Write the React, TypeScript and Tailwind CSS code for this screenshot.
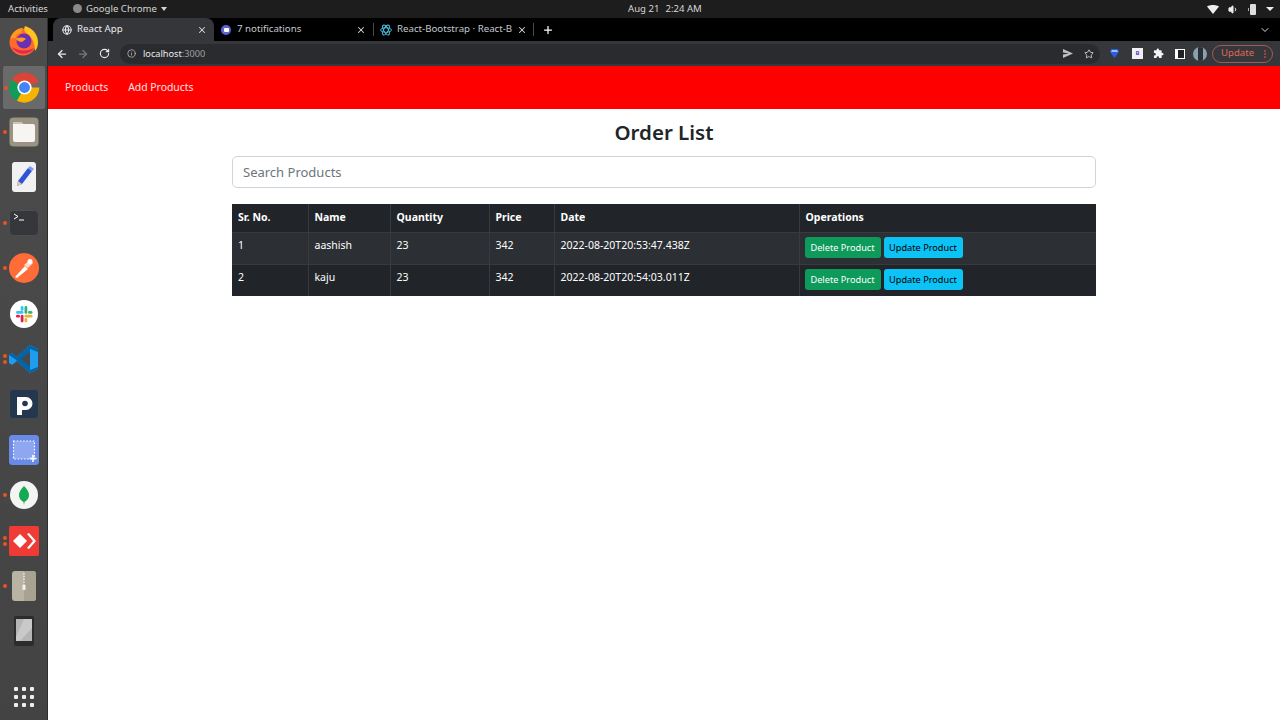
import React from 'react';
import { ArrowLeft, ArrowRight, RotateCw, Info, Star, ChevronDown, X, Plus, Globe, Volume1 } from 'lucide-react';

const Dot = ({ n = 1 }: { n?: number }) => (
  <div className="absolute left-[3px] top-0 bottom-0 flex flex-col justify-center gap-[2px]">
    {Array.from({ length: n }).map((_, i) => (
      <span key={i} className="w-[4px] h-[4px] rounded-full bg-[#e95420]" />
    ))}
  </div>
);

const Firefox = () => (
  <svg width="32" height="32" viewBox="0 0 32 32">
    <circle cx="15" cy="17" r="13.5" fill="#ff6a2b" />
    <path d="M3 14C4 7 9 3 15 3c-2 2-2 4-1 5-4 0-6 2-6 5-2 0-4 0-5 1z" fill="#ff9a1f" />
    <path d="M17 1c7 2 13 8 13 16 0 4-1 7-3 9 0-8-3-15-10-19-1-2-1-4 0-6z" fill="#ffc21f" />
    <circle cx="16" cy="16" r="7.5" fill="#6b2fb3" />
    <path d="M8 14c3-2 8-2 10 0l-4 3c-2 0-5-1-6-3z" fill="#ff9a1f" />
    <path d="M4 22c3 6 10 8 16 6 3-1 5-3 6-5-5 3-14 4-22-1z" fill="#e8264f" />
  </svg>
);

const Chrome = () => (
  <svg width="35" height="35" viewBox="0 0 32 32">
    <path d="M16 16 4 9.500A14 14 0 0 1 29 11z" fill="#db4437" />
    <path d="M16 16 9 28.200A14 14 0 0 1 4 9z" fill="#0f9d58" />
    <path d="M16 16h13.600A14 14 0 0 1 9 28.200z" fill="#f4b400" />
    <circle cx="16" cy="16" r="6.500" fill="#fff" />
    <circle cx="16" cy="16" r="5" fill="#4285f4" />
  </svg>
);

const Files = () => (
  <svg width="30" height="30" viewBox="0 0 30 30">
    <rect x="0.5" y="0.5" width="29" height="29" rx="4" fill="#9b9484" />
    <path d="M4 7a2 2 0 0 1 2-2h6l2 2h10a2 2 0 0 1 2 2v14a2 2 0 0 1-2 2H6a2 2 0 0 1-2-2z" fill="#f6f5f2" />
    <path d="M4 7a2 2 0 0 1 2-2h6l2 2z" fill="#c9c5ba" />
  </svg>
);

const Editor = () => (
  <svg width="24" height="30" viewBox="0 0 24 30">
    <rect width="24" height="30" rx="3" fill="#f1f1f4" />
    <path d="m16 6 4 3-10 13-5 2 1-5z" fill="#2e55d8" />
    <path d="m16 6 2-2 4 3-2 2z" fill="#7d9bf0" />
    <path d="m6 19 4 3-5 2z" fill="#e7c9a0" />
  </svg>
);

const Terminal = () => (
  <svg width="30" height="26" viewBox="0 0 30 26">
    <rect x="0.5" y="0.5" width="29" height="25" rx="4" fill="#36373a" stroke="#4d4e52" />
    <path d="m5 4 4 2.500L5 9" fill="none" stroke="#fff" strokeWidth="1" />
    <path d="M10 10h5" stroke="#fff" strokeWidth="1" />
  </svg>
);

const Postman = () => (
  <svg width="30" height="30" viewBox="0 0 30 30">
    <circle cx="15" cy="15" r="15" fill="#ff6c37" />
    <path d="M6 24 16 13l3 3L8 25z" fill="#fff" />
    <path d="M15 12l6-5 3 3-5 5z" fill="#ffd9c9" />
    <circle cx="21" cy="8.500" r="2.500" fill="#fff" />
  </svg>
);

const Slack = () => (
  <svg width="28" height="28" viewBox="0 0 28 28">
    <circle cx="14" cy="14" r="14" fill="#fff" />
    <rect x="6" y="11" width="7.500" height="2.800" rx="1.400" fill="#36c5f0" />
    <rect x="10.700" y="6" width="2.800" height="5" rx="1.400" fill="#36c5f0" />
    <rect x="14.500" y="6" width="2.800" height="7.800" rx="1.400" fill="#2eb67d" />
    <rect x="18" y="11" width="4.500" height="2.800" rx="1.400" fill="#2eb67d" />
    <rect x="14.500" y="14.800" width="8" height="2.800" rx="1.400" fill="#ecb22e" />
    <rect x="14.500" y="18" width="2.800" height="4.500" rx="1.400" fill="#ecb22e" />
    <rect x="10.700" y="14.800" width="2.800" height="7.700" rx="1.400" fill="#e01e5a" />
    <rect x="6" y="14.800" width="4" height="2.800" rx="1.400" fill="#e01e5a" />
  </svg>
);

const VSCode = () => (
  <svg width="30" height="30" viewBox="0 0 30 30">
    <path d="M21 1 29 5v20l-8 4-13-12-5 4-3-2v-8l3-2 5 4z" fill="#1f9cf0" />
    <path d="M21 1 8 13l-5-4-3 2 6 4 15 14 8-4v-2l-8 3V5l8 3V5z" fill="#0065a9" />
    <path d="M21 8v14l-9-7z" fill="#48484a" />
  </svg>
);

const Pgadmin = () => (
  <svg width="28" height="28" viewBox="0 0 28 28">
    <rect width="28" height="28" rx="3" fill="#24374e" />
    <path d="M7 7h9a6.500 6.500 0 0 1 0 13h-4v5H7z" fill="#fff" />
    <circle cx="15" cy="13.500" r="2.800" fill="#24374e" />
  </svg>
);

const Screenshot = () => (
  <svg width="30" height="30" viewBox="0 0 30 30">
    <rect width="30" height="30" rx="3.500" fill="#6a8ae8" />
    <rect x="4.500" y="6" width="21" height="18" fill="#8ea7f0" stroke="#fff" strokeWidth="1.200" strokeDasharray="1.600 1.600" />
    <path d="M24 20v7M20.500 23.500h7" stroke="#fff" strokeWidth="1.600" />
  </svg>
);

const Mongo = () => (
  <svg width="28" height="28" viewBox="0 0 28 28">
    <circle cx="14" cy="14" r="14" fill="#f4f4f2" />
    <path d="M14 5c3 3 5 6 5 9 0 4-3 6-4.500 7l-.5 3-.5-3C12 20 9 18 9 14c0-3 2-6 5-9z" fill="#13aa52" />
  </svg>
);

const Anydesk = () => (
  <svg width="30" height="30" viewBox="0 0 30 30">
    <rect width="30" height="30" rx="2" fill="#ef3b36" />
    <path d="m11 8 7 7-7 7-7-7z" fill="#fff" />
    <path d="m18 8 2-1 7 8-7 8-2-1 6-7z" fill="#fff" />
  </svg>
);

const Archive = () => (
  <svg width="24" height="30" viewBox="0 0 24 30">
    <rect width="24" height="30" rx="3" fill="#b9b3a3" />
    <path d="M12 0h9a3 3 0 0 1 3 3v24a3 3 0 0 1-3 3h-9z" fill="#a8a291" />
    <path d="M12 2v12" stroke="#f2f0ea" strokeWidth="1.400" strokeDasharray="1.400 1.400" />
    <rect x="10.500" y="14" width="3" height="5" fill="#f2f0ea" />
  </svg>
);

const Tablet = () => (
  <svg width="20" height="30" viewBox="0 0 20 30">
    <rect width="20" height="30" rx="2" fill="#2b2c2e" />
    <rect x="2" y="3" width="16" height="22" fill="#b5b5b5" />
    <path d="m10 3h8v9l-12 13H2v-4z" fill="#c9c9c9" />
  </svg>
);

const Bootstrap = () => (
  <svg width="12" height="12" viewBox="0 0 24 24" fill="none" stroke="#4dc6e6" strokeWidth="1.800">
    <ellipse cx="12" cy="12" rx="11" ry="4.500" />
    <ellipse cx="12" cy="12" rx="11" ry="4.500" transform="rotate(60 12 12)" />
    <ellipse cx="12" cy="12" rx="11" ry="4.500" transform="rotate(120 12 12)" />
  </svg>
);

const Tab = ({ icon, title, active }: { icon: React.ReactNode; title: string; active?: boolean }) => (
  <div className={`h-full flex items-center pr-[7px] ${active ? 'w-[161px] pl-[8px] gap-[4px] bg-[#35363a] rounded-t-lg text-[#e8eaed]' : 'w-[159px] pl-[6px] gap-[5px] text-[#c4c7cc]'}`}>
    <span className="w-[12px] flex justify-center shrink-0">{icon}</span>
    <span className="flex-1 text-[9.7px] whitespace-nowrap">{title}</span>
    <X size={10} className="text-[#dadce0] shrink-0" strokeWidth={2.5} />
  </div>
);

const dock = [
  { icon: <Firefox /> },
  { icon: <Chrome />, dots: 1, active: true },
  { icon: <Files />, dots: 1 },
  { icon: <Editor /> },
  { icon: <Terminal />, dots: 1 },
  { icon: <Postman />, dots: 1 },
  { icon: <Slack /> },
  { icon: <VSCode />, dots: 2 },
  { icon: <Pgadmin /> },
  { icon: <Screenshot /> },
  { icon: <Mongo />, dots: 1 },
  { icon: <Anydesk />, dots: 2 },
  { icon: <Archive />, dots: 1 },
  { icon: <Tablet /> },
];

const rows = [
  { id: 1, name: 'aashish', qty: 23, price: 342, date: '2022-08-20T20:53:47.438Z', bg: 'bg-[#2c3034]' },
  { id: 2, name: 'kaju', qty: 23, price: 342, date: '2022-08-20T20:54:03.011Z', bg: 'bg-[#212529]' },
];

const th = 'border-l border-[#373b3e] first:border-l-0 px-[6px] text-left font-bold align-middle';
const td = 'border-l border-[#373b3e] first:border-l-0 px-[6px] pt-[5px] leading-[14px] align-top font-normal';

export default function App() {
  return (
    <div className="w-[1280px] h-[720px] overflow-hidden flex flex-col bg-white font-['Noto_Sans',sans-serif]">
      {/* gnome top bar */}
      <div className="h-[18px] shrink-0 bg-[#1d1d1d] flex items-center text-[9.6px] text-[#d6d6d6]">
        <span className="pl-[8px] w-[73px]">Activities</span>
        <span className="w-[555px] flex items-center gap-[4px]">
          <span className="w-[9px] h-[9px] rounded-full bg-[#8a8a8a]" />
          Google Chrome
          <span className="border-x-[3.5px] border-x-transparent border-t-[4px] border-t-[#d6d6d6]" />
        </span>
        <span className="flex gap-[6px]">
          <span>Aug 21</span>
          <span>2:24 AM</span>
        </span>
        <div className="ml-auto flex items-center gap-[9px] pr-[6px]">
          <svg width="12" height="9" viewBox="0 0 12 9"><path d="M0 1.500C3-.5 9-.5 12 1.500L6 9z" fill="#eee" /></svg>
          <Volume1 size={11} fill="#eee" className="text-[#eee]" />
          <svg width="9" height="12" viewBox="0 0 9 12"><rect x="2" y="1" width="6" height="11" rx="1" fill="#ddd" /><rect x="0" y="5" width="1" height="3" fill="#aaa" /></svg>
          <span className="border-x-[4px] border-x-transparent border-t-[4px] border-t-[#eee]" />
        </div>
      </div>

      <div className="flex-1 flex min-h-0">
        {/* dock */}
        <div className="w-[48px] shrink-0 bg-gradient-to-b from-[#4c4c4c] to-[#434343] border-r border-[#2e2e2e] flex flex-col pt-[0.5px] pb-[5px]">
          {dock.map((d, i) => (
            <div key={i} className={`relative flex items-center justify-center ${d.active ? 'mt-[2.5px] h-[43px] bg-[#6a6a6b] ml-[3px] mr-[2px] rounded-[2px]' : 'h-[45.4px]'}`}>
              {d.dots ? (
                <span className={d.active ? 'absolute inset-y-0 -left-[2px] w-[4px]' : ''}>
                  <Dot n={d.dots} />
                </span>
              ) : null}
              {d.icon}
            </div>
          ))}
          <div className="mt-auto grid grid-cols-3 gap-[4px] w-fit mx-auto mb-[8px]">
            {Array.from({ length: 9 }).map((_, i) => (
              <span key={i} className="w-[4px] h-[4px] bg-[#eee] rounded-[1px]" />
            ))}
          </div>
        </div>

        <div className="flex-1 min-w-0 flex flex-col">
          {/* chrome tabs */}
          <div className="h-[23px] shrink-0 bg-black flex items-center pl-[5px]">
            <Tab active title="React App" icon={<Globe size={10} className="text-[#e8eaed]" strokeWidth={2.5} />} />
            <Tab title="7 notifications" icon={<span className="w-[10px] h-[10px] rounded-full bg-[#5b63d6] flex items-center justify-center"><span className="w-[5px] h-[4px] bg-white rounded-[1px]" /></span>} />
            <span className="w-px h-[13px] bg-[#4a4a4a]" />
            <Tab title="React-Bootstrap · React-B" icon={<Bootstrap />} />
            <span className="w-px h-[13px] bg-[#4a4a4a]" />
            <Plus size={12} className="text-white ml-[8px]" strokeWidth={2.5} />
            <ChevronDown size={12} className="text-[#dadce0] ml-auto mr-[9px]" strokeWidth={2} />
          </div>

          {/* chrome toolbar */}
          <div className="h-[25px] shrink-0 bg-[#36373a] flex items-center pl-[8px] pr-[6px]">
            <ArrowLeft size={12} className="text-[#e8eaed]" strokeWidth={2.5} />
            <ArrowRight size={12} className="text-[#77797d] ml-[9px]" strokeWidth={2.5} />
            <RotateCw size={11} className="text-[#e8eaed] ml-[10px]" strokeWidth={2.5} />
            <div className="ml-[10px] w-[980px] h-[20px] rounded-full bg-[#2a2b2e] flex items-center pl-[7px] pr-[6px]">
              <Info size={9} className="text-[#bdc1c6]" />
              <span className="ml-[7px] text-[9.2px] text-[#e8eaed]">localhost<span className="text-[#9aa0a6]">:3000</span></span>
              <svg className="ml-auto" width="10" height="9" viewBox="0 0 10 9"><path d="M0 0l10 4.500L0 9V5.500l6-1-6-1z" fill="#bdc1c6" /></svg>
              <Star size={10} className="text-[#dadce0] ml-[11px]" strokeWidth={2} />
            </div>
            <svg className="ml-[10px]" width="9" height="9" viewBox="0 0 9 9"><path d="M1 0h7l1 3-4.500 6L0 3z" fill="#2f5be0" /><path d="M2 1h5l1 2H1z" fill="#9fc0ff" /></svg>
            <span className="ml-[13px] w-[11px] h-[11px] bg-[#f1f1f4] text-[#6f42c1] text-[6px] font-bold flex items-center justify-center">B</span>
            <svg className="ml-[10px]" width="11" height="11" viewBox="0 0 24 24"><path d="M20.500 11H19V7a2 2 0 0 0-2-2h-4V3.500a2.500 2.500 0 0 0-5 0V5H4a2 2 0 0 0-2 2v3.800h1.500a2.700 2.700 0 0 1 0 5.400H2V20a2 2 0 0 0 2 2h3.800v-1.500a2.700 2.700 0 0 1 5.400 0V22H17a2 2 0 0 0 2-2v-4h1.500a2.500 2.500 0 0 0 0-5z" fill="#f1f3f4" /></svg>
            <span className="ml-[11px] w-[10px] h-[10px] bg-white flex justify-end p-[1px]"><span className="w-[6px] h-full bg-[#202124]" /></span>
            <span className="ml-[8px] w-[14px] h-[14px] rounded-full bg-[#8aa0ad] overflow-hidden flex justify-center"><span className="w-[5px] h-full bg-[#2b2f36]" /></span>
            <div className="ml-[5px] w-[61px] h-[18px] rounded-full border border-[#a35a55] flex items-center pl-[8px] pr-[6px] text-[9.6px] text-[#e0685e]">
              Update
              <span className="ml-auto flex flex-col gap-[1px]">
                <span className="w-[2px] h-[2px] rounded-full bg-[#c0463e]" />
                <span className="w-[2px] h-[2px] rounded-full bg-[#c0463e]" />
                <span className="w-[2px] h-[2px] rounded-full bg-[#c0463e]" />
              </span>
            </div>
          </div>

          {/* page */}
          <nav className="h-[43px] shrink-0 bg-[#ff0000] flex items-center gap-[20px] pl-[17px] pt-[1px] text-[10.4px] text-white/90">
            <span>Products</span>
            <span>Add Products</span>
          </nav>
          <main className="w-[864px] ml-[184px] flex flex-col">
            <h1 className="mt-[10px] h-[28px] leading-[26px] text-center text-[20.5px] font-semibold text-[#212529]">Order List</h1>
            <input
              placeholder="Search Products"
              className="mt-[9px] h-[32px] rounded-[5px] border border-[#ced4da] px-[10px] text-[13px] placeholder:text-[#6c757d] outline-none"
            />
            <table className="mt-[16px] w-full table-fixed border-collapse text-[10.5px] text-white">
              <colgroup>
                <col className="w-[76px]" />
                <col className="w-[82px]" />
                <col className="w-[99px]" />
                <col className="w-[65px]" />
                <col className="w-[245px]" />
                <col />
              </colgroup>
              <thead>
                <tr className="h-[28px] bg-[#212529]">
                  <th className={th}>Sr. No.</th>
                  <th className={th}>Name</th>
                  <th className={th}>Quantity</th>
                  <th className={th}>Price</th>
                  <th className={th}>Date</th>
                  <th className={th}>Operations</th>
                </tr>
              </thead>
              <tbody>
                {rows.map((r) => (
                  <tr key={r.id} className={`h-[32px] ${r.bg} border-t border-[#373b3e]`}>
                    <td className={td}>{r.id}</td>
                    <td className={td}>{r.name}</td>
                    <td className={td}>{r.qty}</td>
                    <td className={td}>{r.price}</td>
                    <td className={td}>{r.date}</td>
                    <td className="border-l border-[#373b3e] pl-[5px] pt-[4.5px] align-top">
                      <div className="flex gap-[3px]">
                        <button className="w-[76px] h-[21px] rounded-[3px] bg-[#0d9a5a] text-[9.2px] text-white">Delete Product</button>
                        <button className="w-[79px] h-[21px] rounded-[3px] bg-[#0dc2f5] text-[9.2px] text-black">Update Product</button>
                      </div>
                    </td>
                  </tr>
                ))}
              </tbody>
            </table>
          </main>
        </div>
      </div>
    </div>
  );
}
